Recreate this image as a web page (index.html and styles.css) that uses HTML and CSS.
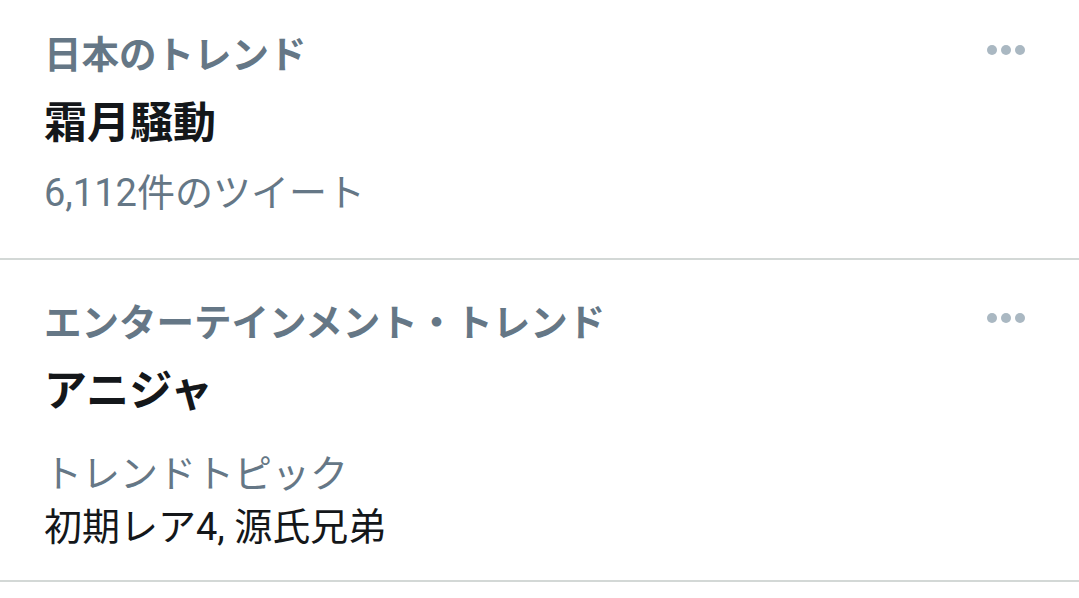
FILE: index.html
```html
<!DOCTYPE html>
<html lang="ja">
<head>
<meta charset="utf-8">
<link rel="stylesheet" href="styles.css">
</head>
<body>
<div class="list">
  <section class="trend trend-first">
    <div class="head">
      <span class="category">日本のトレンド</span>
      <svg class="more" width="38" height="10" viewBox="0 0 38 10"><circle cx="5" cy="5" r="5"/><circle cx="19" cy="5" r="5"/><circle cx="33" cy="5" r="5"/></svg>
    </div>
    <div class="name">霜月騒動</div>
    <div class="meta">6,112件のツイート</div>
  </section>
  <section class="trend trend-second">
    <div class="head">
      <span class="category">エンターテインメント・トレンド</span>
      <svg class="more" width="38" height="10" viewBox="0 0 38 10"><circle cx="5" cy="5" r="5"/><circle cx="19" cy="5" r="5"/><circle cx="33" cy="5" r="5"/></svg>
    </div>
    <div class="name">アニジャ</div>
    <div class="meta meta-topic">トレンドトピック</div>
    <div class="desc">初期レア4, 源氏兄弟</div>
  </section>
</div>
</body>
</html>
```

FILE: styles.css
```css
html, body {
  margin: 0;
  padding: 0;
  background: #ffffff;
}
body {
  font-family: Roboto, "Noto Sans CJK JP", sans-serif;
  width: 1079px;
  height: 598px;
  overflow: hidden;
}
.list {
  display: flex;
  flex-direction: column;
}
.trend {
  display: flex;
  flex-direction: column;
  padding: 0 54px 0 44px;
  border-bottom: 2px solid #d3d8d6;
  box-sizing: border-box;
}
.trend-first {
  padding-top: 31px;
  height: 260px;
}
.trend-second {
  padding-top: 39px;
  height: 322px;
}
.head {
  display: flex;
  justify-content: space-between;
  align-items: flex-start;
  height: 48px;
}
.category {
  font-size: 37.5px;
  font-weight: 700;
  line-height: 48px;
  color: #657786;
}
.more {
  fill: #aab8c2;
  display: block;
  margin-top: 14px;
}
.name {
  margin-top: 18px;
  font-size: 43px;
  font-weight: 700;
  line-height: 52px;
  color: #14171a;
}
.meta {
  margin-top: 20px;
  font-size: 38px;
  line-height: 48px;
  color: #657786;
}
.meta-topic {
  margin-top: 33px;
}
.desc {
  margin-top: 5px;
  font-size: 38px;
  line-height: 48px;
  color: #14171a;
}
```
